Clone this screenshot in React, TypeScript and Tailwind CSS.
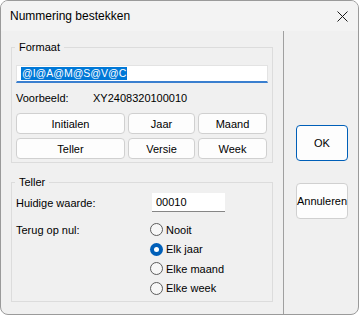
import React from 'react'

const formatButtons = ['Initialen', 'Jaar', 'Maand', 'Teller', 'Versie', 'Week']
const resetOptions = ['Nooit', 'Elk jaar', 'Elke maand', 'Elke week']

function Radio({ label, checked }: { label: string; checked?: boolean }) {
  return (
    <div className="flex h-[19.5px] items-center">
      {checked ? (
        <span className="flex h-[13px] w-[13px] items-center justify-center rounded-full bg-[#005fb8]">
          <span className="h-[5px] w-[5px] rounded-full bg-white" />
        </span>
      ) : (
        <span className="h-[13px] w-[13px] rounded-full border border-[#5c5c5c] bg-[#f7f7f7]" />
      )}
      <span className="ml-[3px]">{label}</span>
    </div>
  )
}

function WinButton({ children, primary }: { children: React.ReactNode; primary?: boolean }) {
  return (
    <button
      className={`flex h-[36px] w-[52px] items-center justify-center rounded-[4px] bg-[#fdfdfd] ${
        primary ? 'border border-[#005fb8]' : 'border border-[#d0d0d0]'
      }`}
    >
      <span className="whitespace-nowrap">{children}</span>
    </button>
  )
}

export default function App() {
  return (
    <div
      className="h-[315px] w-[359px] bg-white text-[11px] leading-[14px] text-black"
      style={{ fontFamily: '"Liberation Sans", Arial, sans-serif' }}
    >
      <div className="flex h-full w-full flex-col overflow-hidden rounded-[8px] border border-[#9a9a9a] bg-[#f0f0f0]">
        {/* title bar */}
        <div className="flex h-[30px] shrink-0 items-center justify-between bg-[#f3f3f3] pl-[9px] pr-[10px]">
          <span className="text-[12px]">Nummering bestekken</span>
          <svg width="11" height="11" viewBox="0 0 11 11">
            <path d="M0.5 0.5 L10.5 10.5 M10.5 0.5 L0.5 10.5" stroke="#1a1a1a" strokeWidth="1" />
          </svg>
        </div>

        <div className="flex flex-1">
          {/* left part */}
          <div className="w-[282px] pl-[10px] pt-[9px]">
            <fieldset className="w-[262px] border border-[#dcdcdc] px-0 pb-[3px]">
              <legend className="ml-[3px] px-[4px]">Formaat</legend>
              <div className="px-[4px] pt-[11px]">
                <div className="flex h-[18px] w-[252px] items-center border border-b-2 border-[#e3e3e3] border-b-[#3a7fcf] bg-white pl-[4px]">
                  <span className="bg-[#0078d7] px-[1px] text-[10.5px] leading-[13px] text-white">@I@A@M@S@V@C</span>
                </div>
                <div className="mt-[8px] flex h-[14px] items-center">
                  <span className="w-[77px]">Voorbeeld:</span>
                  <span>XY2408320100010</span>
                </div>
                <div className="mt-[8px] grid grid-cols-[109px_67px_69px] gap-x-[3px] gap-y-[4px]">
                  {formatButtons.map((b) => (
                    <button
                      key={b}
                      className="h-[21px] rounded-[4px] border border-[#d0d0d0] bg-[#fdfdfd] text-center"
                    >
                      {b}
                    </button>
                  ))}
                </div>
              </div>
            </fieldset>

            <fieldset className="mt-[12px] w-[262px] border border-[#dcdcdc] px-0 pb-[3px]">
              <legend className="ml-[3px] px-[4px]">Teller</legend>
              <div className="px-[4px] pt-[4px]">
                <div className="flex h-[19px] items-center">
                  <span className="w-[136px]">Huidige waarde:</span>
                  <div className="flex h-[19px] w-[73px] items-center border-b border-[#868686] bg-white pl-[4px]">
                    00010
                  </div>
                </div>
                <div className="mt-[8px] flex">
                  <span className="flex h-[19.5px] w-[134px] items-center">Terug op nul:</span>
                  <div className="flex flex-col">
                    {resetOptions.map((o, i) => (
                      <Radio key={o} label={o} checked={i === 1} />
                    ))}
                  </div>
                </div>
              </div>
            </fieldset>
          </div>

          {/* separator */}
          <div className="w-px bg-[#a0a0a0]" />

          {/* right part */}
          <div className="flex flex-col gap-[22px] pl-[12px] pt-[94px]">
            <WinButton primary>OK</WinButton>
            <WinButton>Annuleren</WinButton>
          </div>
        </div>
      </div>
    </div>
  )
}
